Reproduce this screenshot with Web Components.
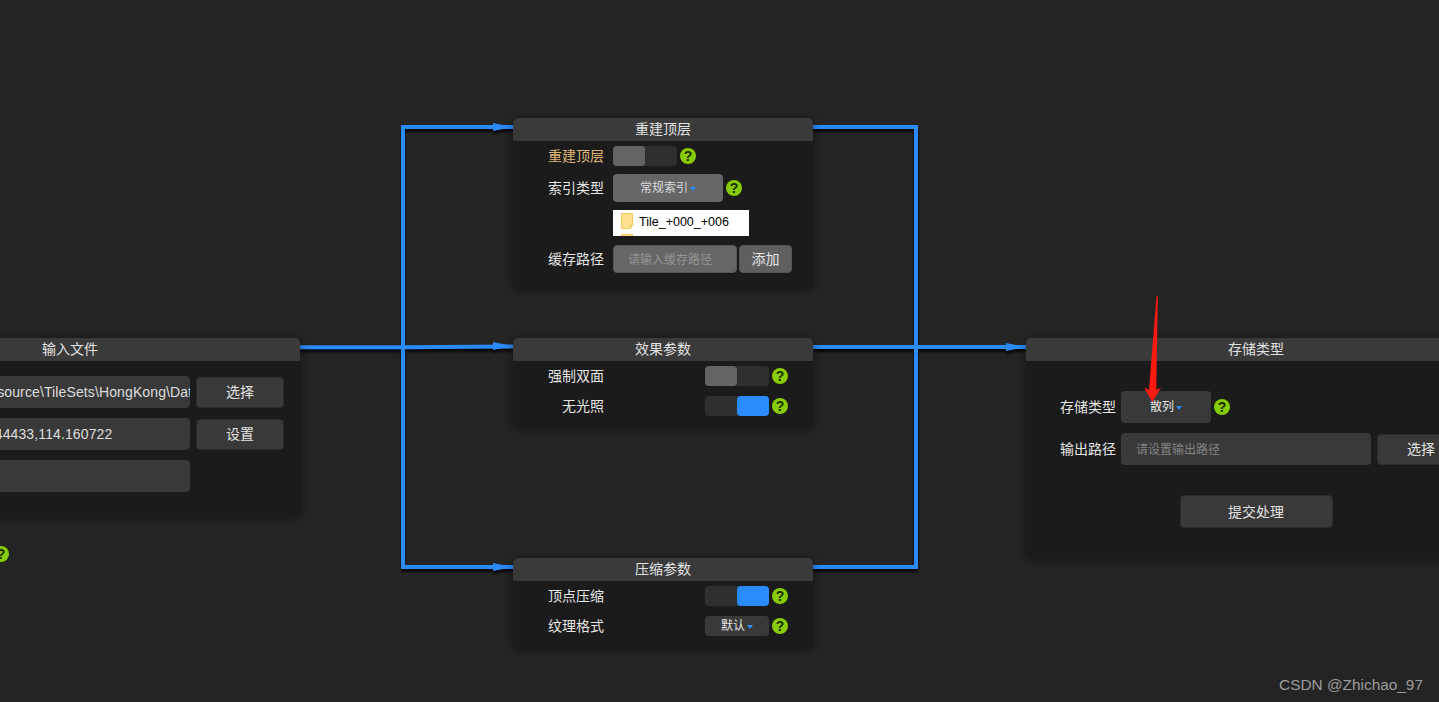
<!DOCTYPE html>
<html lang="zh">
<head>
<meta charset="utf-8">
<title>flow</title>
<style>
  html, body { margin: 0; height: 100%; background: #242424; overflow: hidden; }
  body { font: 14px "Liberation Sans", "Noto Sans CJK SC", sans-serif; color: #e4e4e4; }
</style>
</head>
<body>
<flow-canvas>
  <wire-layer></wire-layer>

  <flow-node heading="输入文件" x="-160" y="338" w="460" h="179" pad="15px 0 0 112px">
    <flow-row>
      <flow-input width="238" value="E:\resource\TileSets\HongKong\Dat"></flow-input>
      <flow-btn width="88" height="31" gap="6">选择</flow-btn>
    </flow-row>
    <flow-row top="10">
      <flow-input width="238" value="22.344433,114.160722"></flow-input>
      <flow-btn width="88" height="31" gap="6">设置</flow-btn>
    </flow-row>
    <flow-row top="10">
      <flow-input width="238"></flow-input>
    </flow-row>
  </flow-node>
  <help-icon class="free" style="left:-10px;top:546px"></help-icon>

  <flow-node heading="重建顶层" x="513" y="118" w="300" h="170" pad="5px 0 0 0">
    <flow-row label="重建顶层" accent>
      <flow-toggle></flow-toggle><help-icon></help-icon>
    </flow-row>
    <flow-row label="索引类型" top="8">
      <flow-select width="110" height="28" tone="light">常规索引</flow-select><help-icon></help-icon>
    </flow-row>
    <flow-row label="" top="8">
      <file-peek>Tile_+000_+006</file-peek>
    </flow-row>
    <flow-row label="缓存路径" top="9">
      <flow-input width="124" height="28" tone="light" placeholder="请输入缓存路径"></flow-input>
      <flow-btn width="53" height="28" gap="2" tone="light">添加</flow-btn>
    </flow-row>
  </flow-node>

  <flow-node heading="效果参数" x="513" y="338" w="300" h="90" pad="5px 0 0 0">
    <flow-row label="强制双面" indent="92">
      <flow-toggle></flow-toggle><help-icon></help-icon>
    </flow-row>
    <flow-row label="无光照" indent="92" top="10">
      <flow-toggle on></flow-toggle><help-icon></help-icon>
    </flow-row>
  </flow-node>

  <flow-node heading="压缩参数" x="513" y="558" w="300" h="90" pad="5px 0 0 0">
    <flow-row label="顶点压缩" indent="92">
      <flow-toggle on></flow-toggle><help-icon></help-icon>
    </flow-row>
    <flow-row label="纹理格式" indent="92" top="10">
      <flow-select width="64" height="20">默认</flow-select><help-icon></help-icon>
    </flow-row>
  </flow-node>

  <flow-node heading="存储类型" x="1026" y="338" w="460" h="220" pad="30px 0 0 0" label-w="90" label-gap="5">
    <flow-row label="存储类型">
      <flow-select width="90" height="32">散列</flow-select><help-icon></help-icon>
    </flow-row>
    <flow-row label="输出路径" top="10">
      <flow-input width="250" placeholder="请设置输出路径"></flow-input>
      <flow-btn width="88" height="31" gap="6">选择</flow-btn>
    </flow-row>
    <flow-row top="30" center>
      <flow-btn width="153" height="33">提交处理</flow-btn>
    </flow-row>
  </flow-node>

  <red-arrow></red-arrow>
  <water-mark>CSDN @Zhichao_97</water-mark>
</flow-canvas>

<script>
// canvas that holds the nodes, everything on it is placed freely
class FlowCanvas extends HTMLElement {
  constructor() {
    super();
    this.attachShadow({ mode: 'open' });
    this.shadowRoot.innerHTML = `
      <style>
        :host { display: block; position: relative; width: 1439px; height: 702px; overflow: hidden; background: #242424; }
        ::slotted(help-icon.free) { position: absolute; }
      </style>
      <slot></slot>
    `;
  }
}

class WireLayer extends HTMLElement {
  constructor() {
    super();
    this.attachShadow({ mode: 'open' });
    const head = (x, y) => `<polygon points="${x - 20},${y - 4} ${x},${y} ${x - 20},${y + 4}"/>`;
    this.shadowRoot.innerHTML = `
      <style>
        :host { position: absolute; left: 0; top: 0; display: block; }
        svg { display: block; overflow: visible; filter: drop-shadow(0 3px 1px rgba(0,0,0,.8)); }
      </style>
      <svg width="1439" height="702" viewBox="0 0 1439 702">
        <g fill="none" stroke="#2a8af6" stroke-width="4">
          <path d="M513 127H403V567H513"/>
          <path d="M300 347.2H403L513 346.4"/>
          <path d="M813 127H916V567H813"/>
          <path d="M813 347H1026"/>
        </g>
        <g fill="#2a8af6">
          ${head(513, 127)}${head(513, 346)}${head(513, 567)}${head(1026, 347)}
        </g>
      </svg>
    `;
  }
}

class FlowNode extends HTMLElement {
  constructor() {
    super();
    this.attachShadow({ mode: 'open' });
  }

  connectedCallback() {
    const get = (name, fallback) => this.getAttribute(name) || fallback;
    this.style.left = get('x', 0) + 'px';
    this.style.top = get('y', 0) + 'px';
    this.style.width = get('w', 300) + 'px';
    this.style.height = get('h', 100) + 'px';
    this.style.setProperty('--label-w', get('label-w', 91) + 'px');
    this.style.setProperty('--label-gap', get('label-gap', 9) + 'px');
    this.shadowRoot.innerHTML = `
      <style>
        :host {
          position: absolute;
          display: flex;
          flex-direction: column;
          box-sizing: border-box;
          background: #1b1b1b;
          border-radius: 6px;
          box-shadow: 0 1px 8px rgba(0,0,0,.45);
        }
        header {
          height: 23px;
          line-height: 23px;
          flex: none;
          text-align: center;
          background: #3a3a3a;
          color: #e2e2e2;
          border-radius: 5px 5px 0 0;
        }
        .body { flex: 1; padding: ${get('pad', '0')}; }
      </style>
      <header>${get('heading', '')}</header>
      <div class="body"><slot></slot></div>
    `;
  }
}

class FlowRow extends HTMLElement {
  constructor() {
    super();
    this.attachShadow({ mode: 'open' });
  }

  connectedCallback() {
    const hasLabel = this.hasAttribute('label');
    const center = this.hasAttribute('center');
    const indent = this.getAttribute('indent') || 0;
    this.style.marginTop = (this.getAttribute('top') || 0) + 'px';
    this.shadowRoot.innerHTML = `
      <style>
        :host { display: flex; align-items: center; ${center ? 'justify-content: center;' : ''} }
        .label {
          width: var(--label-w);
          margin-right: var(--label-gap);
          line-height: 16px;
          flex: none;
          text-align: right;
          white-space: nowrap;
          color: ${this.hasAttribute('accent') ? '#dfb878' : '#e6e6e6'};
        }
        .ctl { display: flex; align-items: center; margin-left: ${indent}px; }
      </style>
      ${hasLabel ? `<span class="label">${this.getAttribute('label')}</span>` : ''}
      <div class="ctl"><slot></slot></div>
    `;
  }
}

class FlowToggle extends HTMLElement {
  constructor() {
    super();
    this.attachShadow({ mode: 'open' });
  }

  connectedCallback() {
    const on = this.hasAttribute('on');
    this.shadowRoot.innerHTML = `
      <style>
        :host { display: flex; width: 64px; height: 20px; flex: none; background: #2f2f2f; border-radius: 4px; ${on ? 'justify-content: flex-end;' : ''} }
        i { display: block; width: 32px; height: 20px; border-radius: 4px; background: ${on ? '#2a8cfb' : '#646464'}; }
      </style>
      <i></i>
    `;
  }
}

class FlowSelect extends HTMLElement {
  constructor() {
    super();
    this.attachShadow({ mode: 'open' });
  }

  connectedCallback() {
    const light = this.getAttribute('tone') === 'light';
    this.shadowRoot.innerHTML = `
      <style>
        :host {
          display: flex;
          align-items: center;
          justify-content: center;
          flex: none;
          box-sizing: border-box;
          width: ${this.getAttribute('width')}px;
          height: ${this.getAttribute('height')}px;
          padding-bottom: 1px;
          border-radius: 4px;
          background: ${light ? '#666' : '#393939'};
          font-size: 12px;
          line-height: 16px;
          color: ${light ? '#dcdcdc' : '#e6e6e6'};
        }
        i { width: 0; height: 0; margin-left: 2px; margin-top: 3px; border: 3px solid transparent; border-top: 4px solid #2a8cfb; border-bottom: 0; }
      </style>
      <slot></slot><i></i>
    `;
  }
}

class FlowInput extends HTMLElement {
  constructor() {
    super();
    this.attachShadow({ mode: 'open' });
  }

  connectedCallback() {
    const light = this.getAttribute('tone') === 'light';
    const value = this.getAttribute('value');
    const hint = this.getAttribute('placeholder');
    this.shadowRoot.innerHTML = `
      <style>
        :host {
          display: flex;
          align-items: center;
          flex: none;
          box-sizing: border-box;
          width: ${this.getAttribute('width')}px;
          height: ${this.getAttribute('height') || 32}px;
          padding: 0 0 0 15px;
          border-radius: 4px;
          background: ${light ? '#666' : '#393939'};
          ${light ? 'border: 1px solid #575757;padding-left: 14px;' : ''}
          overflow: hidden;
          white-space: nowrap;
          color: #dedede;
          letter-spacing: .12px;
        }
        .hint { font-size: 12px; line-height: 16px; padding-top: 2px; letter-spacing: 0; color: ${light ? '#949494' : '#838383'}; }
      </style>
      ${value ? `<span>${value}</span>` : ''}
      ${hint ? `<span class="hint">${hint}</span>` : ''}
    `;
  }
}

class FlowBtn extends HTMLElement {
  constructor() {
    super();
    this.attachShadow({ mode: 'open' });
  }

  connectedCallback() {
    const light = this.getAttribute('tone') === 'light';
    this.style.marginLeft = (this.getAttribute('gap') || 0) + 'px';
    this.shadowRoot.innerHTML = `
      <style>
        :host {
          display: flex;
          align-items: center;
          justify-content: center;
          flex: none;
          box-sizing: border-box;
          width: ${this.getAttribute('width')}px;
          height: ${this.getAttribute('height')}px;
          line-height: 16px;
          border-radius: 4px;
          border: 1px solid ${light ? '#555' : '#2c2c2c'};
          background: ${light ? '#5f5f5f' : '#393939'};
          color: #e4e4e4;
        }
      </style>
      <slot></slot>
    `;
  }
}

class HelpIcon extends HTMLElement {
  constructor() {
    super();
    this.attachShadow({ mode: 'open' });
    this.shadowRoot.innerHTML = `
      <style>
        :host {
          display: flex;
          align-items: center;
          justify-content: center;
          flex: none;
          width: 16px;
          height: 16px;
          margin-left: 3px;
          border-radius: 50%;
          background: #86cc00;
          color: #1c2a06;
          font: bold 14px/16px "Liberation Sans", sans-serif;
        }
      </style>
      ?
    `;
  }
}

// the pasted bit of explorer window under the index type
class FilePeek extends HTMLElement {
  constructor() {
    super();
    this.attachShadow({ mode: 'open' });
    this.shadowRoot.innerHTML = `
      <style>
        :host {
          display: flex;
          position: relative;
          box-sizing: border-box;
          width: 136px;
          height: 26px;
          padding: 0 0 2px 26px;
          align-items: center;
          overflow: hidden;
          background: #fff;
          color: #000;
          font: 12.5px "Liberation Sans", sans-serif;
        }
        svg { position: absolute; left: 8px; top: 3px; }
      </style>
      <svg width="13" height="24" viewBox="0 0 13 24">
        <path d="M.5.5H11.5V11.5L9.5 15.5H.5Z" fill="#ffe08e" stroke="#f0c95c"/>
        <path d="M9.5 15.5V12H12.5" fill="none" stroke="#f0c95c"/>
        <rect x=".5" y="21.5" width="11" height="4" fill="#ffe08e" stroke="#f0c95c"/>
      </svg>
      <slot></slot>
    `;
  }
}

class RedArrow extends HTMLElement {
  constructor() {
    super();
    this.attachShadow({ mode: 'open' });
    this.shadowRoot.innerHTML = `
      <style>
        :host { position: absolute; left: 0; top: 0; display: block; pointer-events: none; }
        svg { display: block; }
      </style>
      <svg width="1439" height="702" viewBox="0 0 1439 702">
        <polygon fill="#fb1a12" points="1156.5,296 1157.8,296 1156.3,390 1161,387.5 1152.3,402 1144,387.5 1149,390"/>
      </svg>
    `;
  }
}

class WaterMark extends HTMLElement {
  constructor() {
    super();
    this.attachShadow({ mode: 'open' });
    this.shadowRoot.innerHTML = `
      <style>
        :host { position: absolute; right: 16px; top: 676px; display: block; font: 15.4px/18px "Liberation Sans", sans-serif; color: #9c9c9c; white-space: nowrap; }
      </style>
      <slot></slot>
    `;
  }
}

customElements.define('flow-canvas', FlowCanvas);
customElements.define('wire-layer', WireLayer);
customElements.define('flow-node', FlowNode);
customElements.define('flow-row', FlowRow);
customElements.define('flow-toggle', FlowToggle);
customElements.define('flow-select', FlowSelect);
customElements.define('flow-input', FlowInput);
customElements.define('flow-btn', FlowBtn);
customElements.define('help-icon', HelpIcon);
customElements.define('file-peek', FilePeek);
customElements.define('red-arrow', RedArrow);
customElements.define('water-mark', WaterMark);
</script>
</body>
</html>
